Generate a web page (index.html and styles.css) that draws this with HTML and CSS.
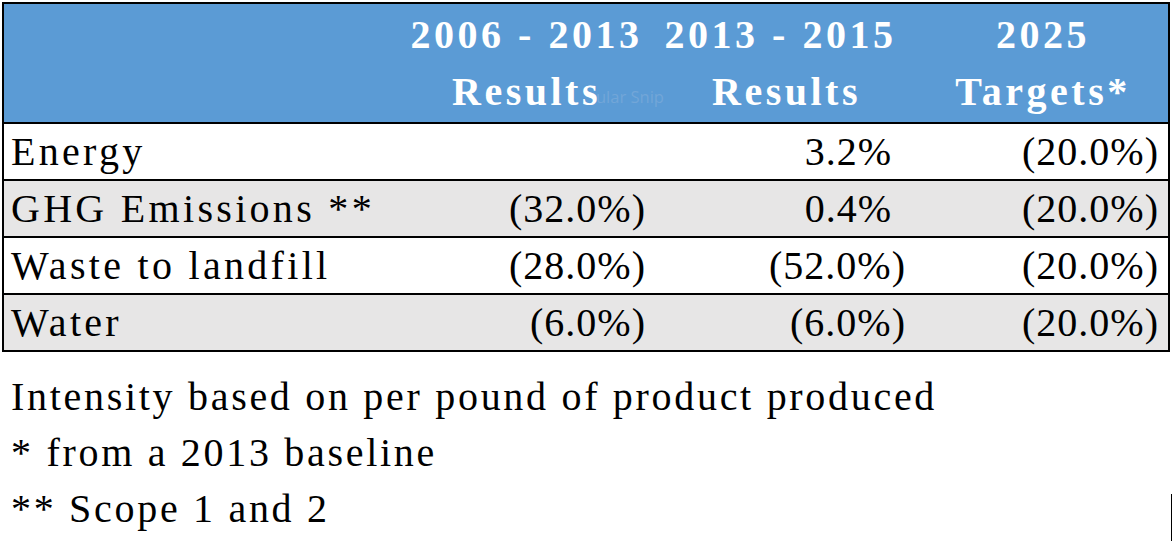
FILE: index.html
```html
<!DOCTYPE html>
<html lang="en">
<head>
<meta charset="utf-8">
<title>Intensity targets</title>
<link rel="stylesheet" href="styles.css">
</head>
<body>
<div class="page">
  <table class="metrics">
    <colgroup>
      <col class="c-label">
      <col class="c-num">
      <col class="c-num">
      <col class="c-last">
    </colgroup>
    <thead>
      <tr>
        <th class="blank"></th>
        <th>2006 - 2013<br>Results<span class="ghost">ular Snip</span></th>
        <th><span class="shift">2013 - 2015</span><br>Results</th>
        <th>2025<br>Targets*</th>
      </tr>
    </thead>
    <tbody>
      <tr>
        <td class="label">Energy</td>
        <td></td>
        <td><span class="pos">3.2%</span></td>
        <td>(20.0%)</td>
      </tr>
      <tr class="alt">
        <td class="label">GHG Emissions **</td>
        <td>(32.0%)</td>
        <td><span class="pos">0.4%</span></td>
        <td>(20.0%)</td>
      </tr>
      <tr>
        <td class="label">Waste to landfill</td>
        <td>(28.0%)</td>
        <td>(52.0%)</td>
        <td>(20.0%)</td>
      </tr>
      <tr class="alt">
        <td class="label">Water</td>
        <td>(6.0%)</td>
        <td>(6.0%)</td>
        <td>(20.0%)</td>
      </tr>
    </tbody>
  </table>
  <div class="notes">
    <p>Intensity based on per pound of product produced</p>
    <p>* from a 2013 baseline</p>
    <p>** Scope 1 and 2</p>
  </div>
  <span class="edge-mark"></span>
</div>
</body>
</html>
```

FILE: styles.css
```css
html, body {
  margin: 0;
  padding: 0;
  background: #ffffff;
}

.page {
  position: relative;
  width: 1174px;
  height: 541px;
  overflow: hidden;
  padding: 2px 0 0 2px;
  box-sizing: border-box;
  font-family: "Liberation Serif", "DejaVu Serif", serif;
  color: #000;
}

.metrics {
  border-collapse: collapse;
  width: 1168px;
  table-layout: fixed;
  border: 2px solid #000;
}

.c-label { width: 392px; }
.c-num { width: 260px; }
.c-last { width: 254px; }

.metrics thead tr {
  background: #5b9bd5;
  height: 120px;
}

.metrics th {
  position: relative;
  color: #fff;
  font-weight: bold;
  font-size: 40px;
  letter-spacing: 3.5px;
  line-height: 57px;
  text-align: center;
  padding: 0 0 0 3px;
  vertical-align: middle;
  border-bottom: 2px solid #000;
  white-space: nowrap;
}

.shift {
  margin-left: -12px;
}

.ghost {
  position: absolute;
  left: 201px;
  top: 83px;
  font-family: "Open Sans", "Liberation Sans", sans-serif;
  font-weight: normal;
  font-size: 16.5px;
  letter-spacing: 0;
  line-height: 20px;
  color: #72a6d8;
}

.metrics td {
  font-size: 40px;
  letter-spacing: 1px;
  height: 55px;
  padding: 0 9px 0 10px;
  text-align: right;
  vertical-align: middle;
  border-top: 2px solid #000;
  white-space: nowrap;
}

.metrics td.label {
  text-align: left;
  letter-spacing: 3.3px;
  padding-left: 7px;
}

.pos {
  padding-right: 14px;
}

.metrics tr.alt td {
  background: #e7e6e6;
}

.notes {
  padding: 17px 0 0 9px;
  font-size: 40px;
  letter-spacing: 2.7px;
}

.notes p {
  margin: 0;
  line-height: 56px;
}

.edge-mark {
  position: absolute;
  left: 1171px;
  top: 494px;
  width: 1px;
  height: 47px;
  background: #000;
}
```
